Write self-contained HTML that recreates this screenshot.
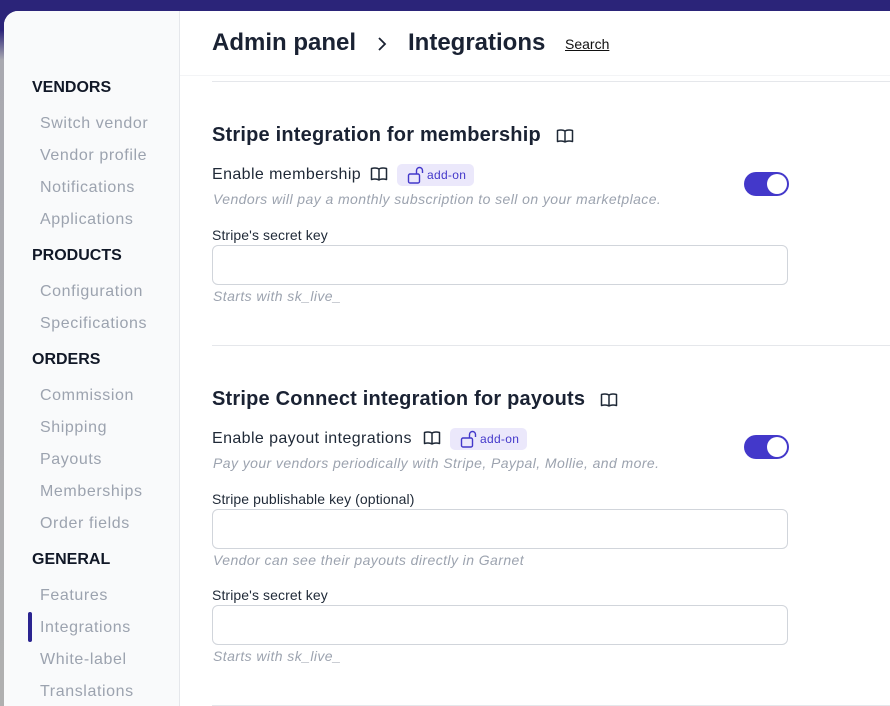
<!DOCTYPE html>
<html style="width:890px;height:706px;overflow:hidden"><head><style>
*{margin:0;padding:0;box-sizing:border-box}
body{width:890px;height:706px;overflow:hidden;position:relative;font-family:"Liberation Sans",sans-serif;background:linear-gradient(#2b2479 0,#2b2479 30px,#a9a9b0 60px,#b0b0b0 100%)}
.panel{position:absolute;left:4px;top:11px;width:886px;height:695px;background:#fff;border-top-left-radius:14px;overflow:hidden}
.side{position:absolute;left:0;top:0;width:176px;height:695px;background:#f9fafb;border-right:1px solid #e5e7eb}
.a{position:absolute;white-space:nowrap}
.h{left:28px;font-size:16px;font-weight:bold;color:#111827}
.i{left:36px;font-size:16px;color:#9ca3af;letter-spacing:0.6px}
.t{font-size:24px;font-weight:bold;color:#1a2233}
.st{font-size:20px;font-weight:bold;color:#1a2233;letter-spacing:0.2px}
.lb{font-size:16px;color:#1f2937;letter-spacing:0.4px}
.hint{font-size:14px;font-style:italic;color:#9ca3af;letter-spacing:0.42px}
.fl{font-size:14px;color:#1f2937;letter-spacing:0.1px}
.inp{position:absolute;left:208px;width:576px;height:40px;border:1px solid #d1d5db;border-radius:6px;background:#fff}
.tog{position:absolute;left:740px;width:45px;height:24px;border-radius:12px;background:#4338ca}
.tog::after{content:"";position:absolute;right:2px;top:2px;width:20px;height:20px;border-radius:50%;background:#fff}
.badge{position:absolute;height:22px;padding:0 8px 0 30px;border-radius:5px;background:#ebe8fb;color:#4338ca;font-size:12px;line-height:22px;letter-spacing:0.3px}
.badge svg{position:absolute;left:10px;top:1px}
.hr{position:absolute;height:1px;background:#e5e7eb}
</style></head><body>
<div class="panel">
<div class="side">
<div class="a h" style="top:68px">VENDORS</div>
<div class="a i" style="top:104px">Switch vendor</div>
<div class="a i" style="top:136px">Vendor profile</div>
<div class="a i" style="top:168px">Notifications</div>
<div class="a i" style="top:200px">Applications</div>
<div class="a h" style="top:236px">PRODUCTS</div>
<div class="a i" style="top:272px">Configuration</div>
<div class="a i" style="top:304px">Specifications</div>
<div class="a h" style="top:340px">ORDERS</div>
<div class="a i" style="top:376px">Commission</div>
<div class="a i" style="top:408px">Shipping</div>
<div class="a i" style="top:440px">Payouts</div>
<div class="a i" style="top:472px">Memberships</div>
<div class="a i" style="top:504px">Order fields</div>
<div class="a h" style="top:540px">GENERAL</div>
<div class="a i" style="top:576px">Features</div>
<div style="position:absolute;left:24px;top:601px;width:4px;height:30px;background:#2b2490;border-radius:3px"></div>
<div class="a i" style="top:608px">Integrations</div>
<div class="a i" style="top:640px">White-label</div>
<div class="a i" style="top:672px">Translations</div>
</div>
<div class="a t" style="left:208px;top:18px">Admin panel</div>
<svg class="a" style="left:372px;top:25px" width="12" height="16" viewBox="0 0 12 16"><path d="M3 2l6 6-6 6" fill="none" stroke="#1a2233" stroke-width="1.8"/></svg>
<div class="a t" style="left:404px;top:18px">Integrations</div>
<div class="a" style="left:561px;top:25px;font-size:14px;color:#111;text-decoration:underline">Search</div>
<div class="hr" style="left:176px;top:64px;width:720px;background:#f3f4f6"></div>
<div class="hr" style="left:208px;top:70px;width:690px"></div>

<div class="a st" style="left:208px;top:113px">Stripe integration for membership</div>
<svg class="a" style="left:552px;top:117px" width="18" height="16" viewBox="0 0 18 16"><path d="M9 3C7 1.8 4 1.8 1.5 2.5v11C4 12.8 7 12.8 9 14c2-1.2 5-1.2 7.5-.5v-11C14 1.8 11 1.8 9 3zM9 3v11" fill="none" stroke="#1f2937" stroke-width="1.5" stroke-linejoin="round"/></svg>
<div class="a lb" style="left:208px;top:155px">Enable membership</div>
<svg class="a" style="left:366px;top:155px" width="18" height="16" viewBox="0 0 18 16"><path d="M9 3C7 1.8 4 1.8 1.5 2.5v11C4 12.8 7 12.8 9 14c2-1.2 5-1.2 7.5-.5v-11C14 1.8 11 1.8 9 3zM9 3v11" fill="none" stroke="#1f2937" stroke-width="1.5" stroke-linejoin="round"/></svg>
<div class="badge" style="left:393px;top:153px"><svg width="18" height="20" viewBox="0 0 18 20"><rect x="1.5" y="9" width="11" height="9" rx="1.5" fill="none" stroke="#4338ca" stroke-width="1.4"/><path d="M9.5 9V5.5a3 3 0 0 1 6 0V8" fill="none" stroke="#4338ca" stroke-width="1.4"/></svg>add-on</div>
<div class="a hint" style="left:209px;top:180px">Vendors will pay a monthly subscription to sell on your marketplace.</div>
<div class="tog" style="top:161px"></div>
<div class="a fl" style="left:208px;top:216px">Stripe's secret key</div>
<div class="inp" style="top:234px"></div>
<div class="a hint" style="left:209px;top:277px">Starts with sk_live_</div>
<div class="hr" style="left:208px;top:334px;width:690px"></div>

<div class="a st" style="left:208px;top:377px">Stripe Connect integration for payouts</div>
<svg class="a" style="left:596px;top:381px" width="18" height="16" viewBox="0 0 18 16"><path d="M9 3C7 1.8 4 1.8 1.5 2.5v11C4 12.8 7 12.8 9 14c2-1.2 5-1.2 7.5-.5v-11C14 1.8 11 1.8 9 3zM9 3v11" fill="none" stroke="#1f2937" stroke-width="1.5" stroke-linejoin="round"/></svg>
<div class="a lb" style="left:208px;top:419px">Enable payout integrations</div>
<svg class="a" style="left:419px;top:419px" width="18" height="16" viewBox="0 0 18 16"><path d="M9 3C7 1.8 4 1.8 1.5 2.5v11C4 12.8 7 12.8 9 14c2-1.2 5-1.2 7.5-.5v-11C14 1.8 11 1.8 9 3zM9 3v11" fill="none" stroke="#1f2937" stroke-width="1.5" stroke-linejoin="round"/></svg>
<div class="badge" style="left:446px;top:417px"><svg width="18" height="20" viewBox="0 0 18 20"><rect x="1.5" y="9" width="11" height="9" rx="1.5" fill="none" stroke="#4338ca" stroke-width="1.4"/><path d="M9.5 9V5.5a3 3 0 0 1 6 0V8" fill="none" stroke="#4338ca" stroke-width="1.4"/></svg>add-on</div>
<div class="a hint" style="left:209px;top:444px">Pay your vendors periodically with Stripe, Paypal, Mollie, and more.</div>
<div class="tog" style="top:424px"></div>
<div class="a fl" style="left:208px;top:480px">Stripe publishable key (optional)</div>
<div class="inp" style="top:498px"></div>
<div class="a hint" style="left:209px;top:541px">Vendor can see their payouts directly in Garnet</div>
<div class="a fl" style="left:208px;top:576px">Stripe's secret key</div>
<div class="inp" style="top:594px"></div>
<div class="a hint" style="left:209px;top:637px">Starts with sk_live_</div>
<div class="hr" style="left:208px;top:694px;width:690px"></div>
</div>
</body></html>
